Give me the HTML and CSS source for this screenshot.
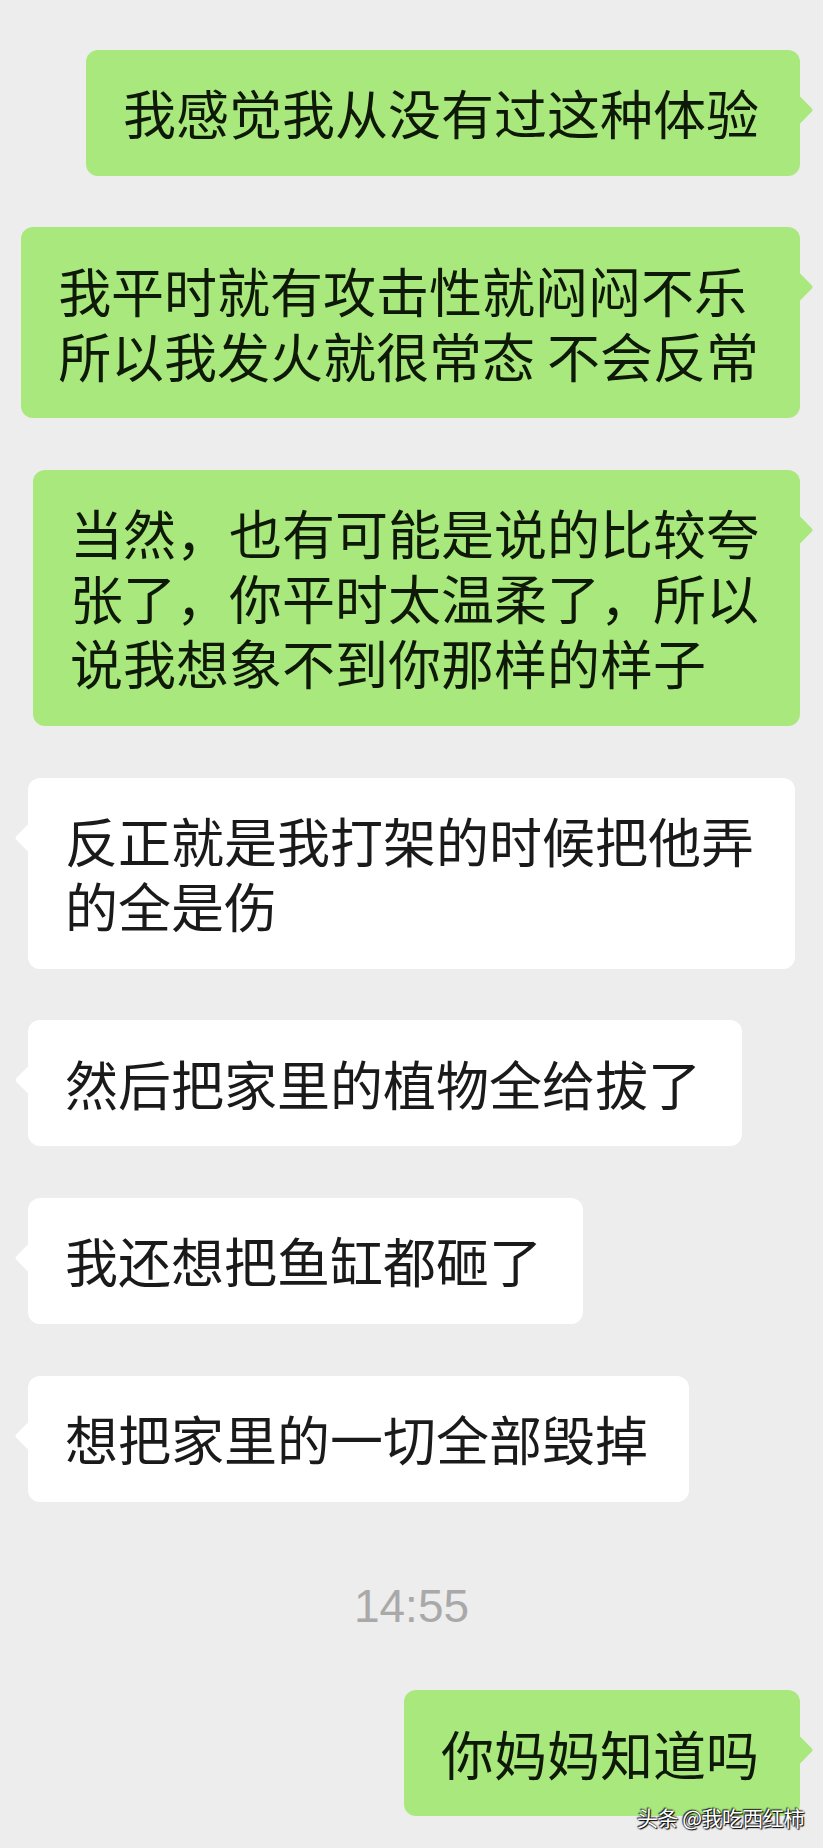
FILE: index.html
```html
<!DOCTYPE html>
<html lang="zh-CN">
<head>
<meta charset="utf-8">
<title>聊天记录</title>
<link rel="stylesheet" href="styles.css">
</head>
<body>
<main class="chat">
  <div class="row row-right"><div class="bubble bubble-green">我感觉我从没有过这种体验</div></div>
  <div class="row row-right"><div class="bubble bubble-green">我平时就有攻击性就闷闷不乐<br>所以我发火就很常态 不会反常</div></div>
  <div class="row row-right"><div class="bubble bubble-green">当然，也有可能是说的比较夸<br>张了，你平时太温柔了，所以<br>说我想象不到你那样的样子</div></div>
  <div class="row row-left"><div class="bubble bubble-white">反正就是我打架的时候把他弄<br>的全是伤</div></div>
  <div class="row row-left"><div class="bubble bubble-white">然后把家里的植物全给拔了</div></div>
  <div class="row row-left"><div class="bubble bubble-white">我还想把鱼缸都砸了</div></div>
  <div class="row row-left"><div class="bubble bubble-white">想把家里的一切全部毁掉</div></div>
  <div class="time">14:55</div>
  <div class="row row-right"><div class="bubble bubble-green">你妈妈知道吗</div></div>
</main>
<div class="watermark">头条 @我吃西红柿</div>
</body>
</html>
```
FILE: styles.css
```css
html, body {
  margin: 0;
  padding: 0;
  background: #ededed;
}
body {
  width: 823px;
  height: 1848px;
  overflow: hidden;
  position: relative;
  font-family: "Noto Sans CJK SC", "Noto Sans", sans-serif;
}
.chat {
  display: flex;
  flex-direction: column;
  gap: 51.7px;
  padding: 49.5px 23px 0 28px;
}
.row {
  display: flex;
}
.row-right {
  justify-content: flex-end;
}
.row-left {
  justify-content: flex-start;
}
.bubble {
  position: relative;
  font-size: 53px;
  line-height: 65px;
  padding: 30.5px 41px 30.5px 37px;
  border-radius: 12px;
  white-space: nowrap;
}
.bubble-green {
  background: #a9e87d;
  color: #0e1a07;
}
.bubble-white {
  background: #ffffff;
  color: #1a1a1a;
}
.bubble::after {
  content: "";
  position: absolute;
  top: 49px;
  width: 22px;
  height: 22px;
  border-radius: 3px;
  transform: rotate(45deg);
}
.bubble-green::after {
  right: -9px;
  background: #a9e87d;
}
.bubble-white::after {
  left: -9px;
  background: #ffffff;
}
.time {
  align-self: center;
  margin: 23px 0 2px -5px;
  font-family: "Liberation Sans", Arial, sans-serif;
  font-size: 46px;
  line-height: 60px;
  color: #a9a9a9;
}
.watermark {
  position: absolute;
  right: 19px;
  top: 1803px;
  font-size: 21px;
  line-height: 28px;
  color: #ffffff;
  text-shadow: 0 0 2px #000, 1px 1px 1px #000, -1px -1px 1px #333;
  letter-spacing: -0.5px;
}
```
